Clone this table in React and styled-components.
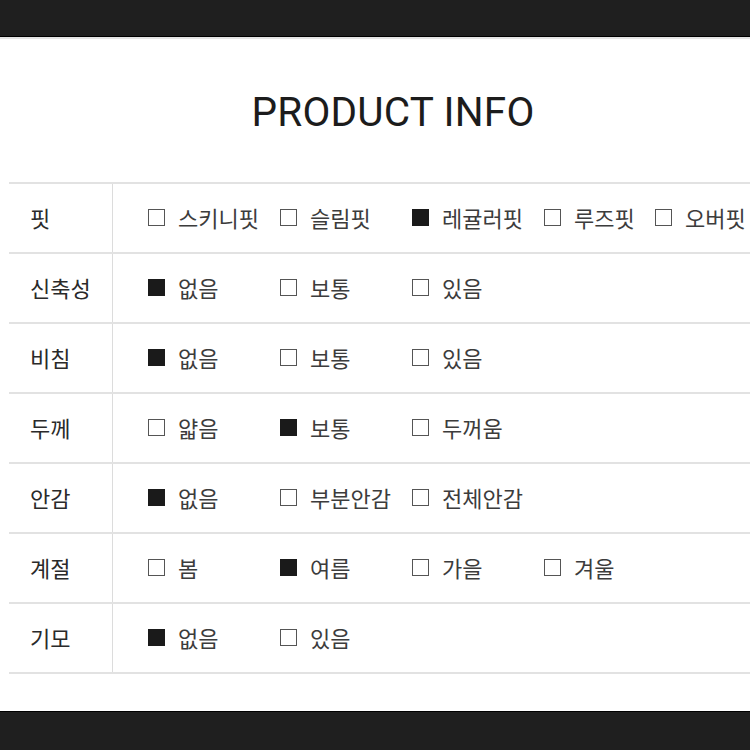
import React from 'react'
import styled, { createGlobalStyle } from 'styled-components'

const GlobalStyle = createGlobalStyle`
  html, body {
    margin: 0;
    padding: 0;
    background: #fff;
  }
  body {
    font-family: "Noto Sans CJK KR", "Noto Sans", sans-serif;
  }
`

const Page = styled.div`
  width: 750px;
  height: 750px;
  display: flex;
  flex-direction: column;
  overflow: hidden;
`

const DarkBar = styled.div`
  flex: 0 0 ${p => p.h}px;
  background: #1f1f1f;
  border-${p => p.side}: 1px solid #000;
  box-sizing: border-box;
`

const Content = styled.div`
  flex: 1;
  display: flex;
  flex-direction: column;
  padding-left: 9px;
  border-top: 2px solid #e4e4e4;
`

const Title = styled.h2`
  margin: 0;
  height: 143px;
  display: flex;
  align-items: center;
  justify-content: center;
  padding-left: 27px;
  font-family: Roboto, "Liberation Sans", sans-serif;
  font-weight: 400;
  font-size: 40.5px;
  color: #1c1c1c;
  letter-spacing: 0.2px;
  box-sizing: border-box;
  padding-top: 2px;
`

const Table = styled.div`
  border-top: 2px solid #e2e2e2;
`

const Row = styled.div`
  display: grid;
  grid-template-columns: 104px 1fr;
  height: 70px;
  border-bottom: 2px solid #e2e2e2;
  box-sizing: border-box;
`

const Label = styled.div`
  display: flex;
  align-items: center;
  padding-left: 21px;
  border-right: 1px solid #dcdcdc;
  font-size: 22px;
  color: #2a2a2a;
  padding-bottom: 2px;
`

const Options = styled.div`
  display: flex;
  align-items: center;
  padding-left: 35px;
  white-space: nowrap;
  padding-bottom: 2px;
`

const Option = styled.div`
  flex: 0 0 ${p => (p.w ? `${p.w}px` : 'auto')};
  display: flex;
  align-items: center;
  gap: 13px;
  font-size: 22px;
  color: #3c3c3c;
`

const Box = styled.span`
  width: 17px;
  height: 17px;
  box-sizing: border-box;
  border: 1.5px solid ${p => (p.on ? '#1a1a1a' : '#555')};
  background: ${p => (p.on ? '#1a1a1a' : '#fff')};
  margin-top: 1px;
`

const rows = [
  { label: '핏', sel: 2, opts: ['스키니핏', '슬림핏', '레귤러핏', '루즈핏', '오버핏'], widths: [132, 132, 132, 111] },
  { label: '신축성', sel: 0, opts: ['없음', '보통', '있음'] },
  { label: '비침', sel: 0, opts: ['없음', '보통', '있음'] },
  { label: '두께', sel: 1, opts: ['얇음', '보통', '두꺼움'] },
  { label: '안감', sel: 0, opts: ['없음', '부분안감', '전체안감'] },
  { label: '계절', sel: 1, opts: ['봄', '여름', '가을', '겨울'] },
  { label: '기모', sel: 0, opts: ['없음', '있음'] },
]

export default function App() {
  return (
    <Page>
      <GlobalStyle />
      <DarkBar h={37} side="bottom" />
      <Content>
        <Title>PRODUCT INFO</Title>
        <Table>
          {rows.map(row => (
            <Row key={row.label}>
              <Label>{row.label}</Label>
              <Options>
                {row.opts.map((o, i) => (
                  <Option key={o} w={row.widths ? row.widths[i] : i < row.opts.length - 1 ? 132 : null}>
                    <Box on={i === row.sel} />
                    {o}
                  </Option>
                ))}
              </Options>
            </Row>
          ))}
        </Table>
      </Content>
      <DarkBar h={39} side="top" />
    </Page>
  )
}
